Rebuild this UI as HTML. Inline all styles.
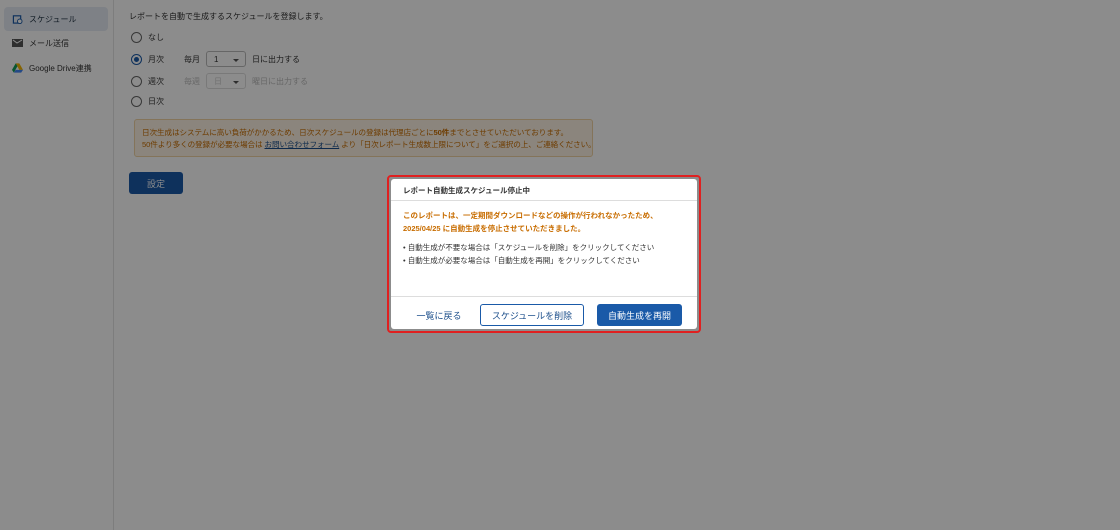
<!DOCTYPE html>
<html><head><meta charset="utf-8"><style>
*{box-sizing:border-box;margin:0;padding:0}
body{width:1120px;height:530px;overflow:hidden;font-family:"Liberation Sans","Noto Sans CJK JP",sans-serif;background:#fff;position:relative;color:#333}
.side{position:absolute;left:0;top:0;width:114px;height:530px;background:#fff;border-right:1px solid #e4e4e4}
.item{position:absolute;left:4px;width:104px;height:24px;font-size:8px;display:flex;align-items:center;padding-left:8px;gap:6px;color:#333}
.sel{background:#e6ecf4;border-radius:4px;color:#234}
.ic{width:11px;height:10px;display:inline-block}
.main{position:absolute;left:129px;top:0;font-size:8px}
.r{position:absolute;display:flex;align-items:center;font-size:8px}
.rad{width:11px;height:11px;border:1.3px solid #666;border-radius:50%;margin-right:6px;position:relative}
.rad.on{border-color:#1a5aa8}
.rad.on::after{content:"";position:absolute;left:2px;top:2px;width:5px;height:5px;border-radius:50%;background:#1a5aa8}
.selbox{width:40px;height:16px;border:1px solid #bbb;border-radius:3px;display:inline-flex;align-items:center;padding-left:7px;margin:0 6px;position:relative}
.selbox::after{content:"";position:absolute;right:6px;top:7px;border:3px solid transparent;border-top:3px solid #555}
.warn{position:absolute;left:134px;top:119px;width:459px;height:38px;background:#fdf3e4;border:1px solid #f0d4a4;border-radius:3px;font-size:7.6px;color:#c86d00;padding:7px 7px;line-height:12px;white-space:nowrap;letter-spacing:-0.1px}
.btn{position:absolute;left:129px;top:172px;width:54px;height:22px;background:#1a5aa8;color:#fff;border-radius:3px;font-size:9px;display:flex;align-items:center;justify-content:center}
.ov{position:absolute;inset:0;background:rgba(0,0,0,.45)}
.redb{position:absolute;left:387px;top:175px;width:314px;height:158px;border:2px solid #e02020;border-radius:4px}
.modal{position:absolute;left:391px;top:179px;width:306px;height:150px;background:#fff;border-radius:3px}
.mh{height:22px;border-bottom:1px solid #ddd;font-size:7.5px;font-weight:bold;padding:6px 12px;color:#333}
.mb{padding:9px 12px;font-size:7.5px;line-height:12.5px}
.or{color:#c86d00;font-weight:bold}
.mf{position:absolute;left:0;right:0;top:117px;border-top:1px solid #ddd;height:33px}
.b{position:absolute;top:7px;height:22px;display:flex;align-items:center;justify-content:center;font-size:9px;border-radius:3px}
</style></head><body>
<div class="side">
<div class="item sel" style="top:7px"><svg class="ic" viewBox="0 0 11 11"><rect x="1" y="2" width="8" height="8" fill="none" stroke="#1a5aa8" stroke-width="1.3"/><circle cx="8" cy="8" r="2.5" fill="#fff" stroke="#1a5aa8"/></svg>スケジュール</div>
<div class="item" style="top:31px"><svg class="ic" viewBox="0 0 11 10"><rect x="0" y="1" width="11" height="8" fill="#555"/><path d="M1 2l4 3 5-3" stroke="#fff" fill="none"/></svg>メール送信</div>
<div class="item" style="top:56px"><svg class="ic" viewBox="0 0 12 10"><path d="M4 0h4l4 7H8z" fill="#f4b400"/><path d="M4 0L0 7l2 3 4-7z" fill="#0f9d58"/><path d="M2 10h8l2-3H4z" fill="#4285f4"/></svg>Google Drive連携</div>
</div>
<div class="main">
<div style="position:absolute;top:11px;white-space:nowrap">レポートを自動で生成するスケジュールを登録します。</div>
</div>
<div class="r" style="left:131px;top:32px"><span class="rad"></span>なし</div>
<div class="r" style="left:131px;top:51px"><span class="rad on"></span>月次<span style="margin-left:20px">毎月</span><span class="selbox">1</span>日に出力する</div>
<div class="r" style="left:131px;top:73px"><span class="rad"></span>週次<span style="margin-left:20px;color:#bbb">毎週</span><span class="selbox" style="border-color:#ddd;color:#ccc">日</span><span style="color:#bbb">曜日に出力する</span></div>
<div class="r" style="left:131px;top:96px"><span class="rad"></span>日次</div>
<div class="warn">日次生成はシステムに高い負荷がかかるため、日次スケジュールの登録は代理店ごとに<b>50件</b>までとさせていただいております。<br>50件より多くの登録が必要な場合は <u style="color:#1a4d8a">お問い合わせフォーム</u> より「日次レポート生成数上限について」をご選択の上、ご連絡ください。</div>
<div class="btn">設定</div>
<div class="ov"></div>
<div class="redb"></div>
<div class="modal">
<div class="mh">レポート自動生成スケジュール停止中</div>
<div class="mb"><div class="or">このレポートは、一定期間ダウンロードなどの操作が行われなかったため、<br>2025/04/25 に自動生成を停止させていただきました。</div>
<div style="margin-top:7px">• 自動生成が不要な場合は「スケジュールを削除」をクリックしてください<br>• 自動生成が必要な場合は「自動生成を再開」をクリックしてください</div></div>
<div class="mf">
<div class="b" style="left:18px;width:60px;color:#1a4d8a">一覧に戻る</div>
<div class="b" style="left:89px;width:104px;border:1px solid #1a5aa8;color:#1a4d8a">スケジュールを削除</div>
<div class="b" style="left:206px;width:85px;background:#1a5aa8;color:#fff">自動生成を再開</div>
</div>
</div>
</body></html>
